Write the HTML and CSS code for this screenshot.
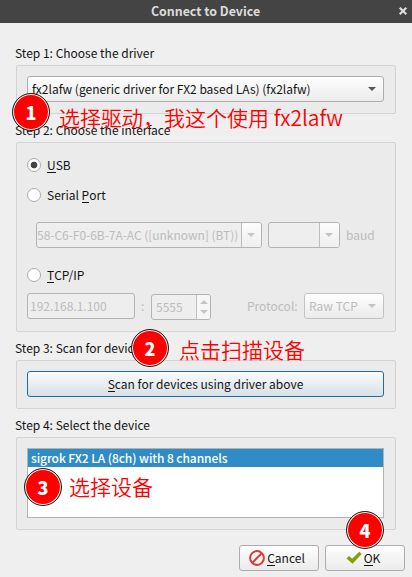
FILE: index.html
```html
<!DOCTYPE html>
<html lang="zh-CN">
<head>
<meta charset="utf-8">
<title>Connect to Device</title>
<link rel="stylesheet" href="styles.css">
</head>
<body>
<div class="dialog">
  <header class="titlebar">
    <span class="title">Connect to Device</span>
    <svg class="close" width="10" height="10" viewBox="0 0 10 10"><path d="M1.7 1.7l6.6 6.6M8.3 1.7l-6.6 6.6" stroke="#e0e0e0" stroke-width="2.1" fill="none"/></svg>
  </header>
  <main class="content">
    <section class="group">
      <h2 class="label">Step 1: Choose the driver</h2>
      <div class="box">
        <div class="combo"><span>fx2lafw (generic driver for FX2 based LAs) (fx2lafw)</span><i class="arrow"></i></div>
      </div>
    </section>
    <section class="group">
      <h2 class="label">Step 2: Choose the interface</h2>
      <div class="box iface">
        <div class="radio"><i class="dot on"></i><span><u>U</u>SB</span></div>
        <div class="radio serial"><i class="dot"></i><span>Serial <u>P</u>ort</span></div>
        <div class="row serial-row">
          <div class="edit port"><span class="value">58-C6-F0-6B-7A-AC ([unknown] (BT))</span><span class="drop"><i class="arrow"></i></span></div>
          <div class="edit rate"><span class="value"></span><span class="drop"><i class="arrow"></i></span></div>
          <span class="baud">baud</span>
        </div>
        <div class="radio"><i class="dot"></i><span><u>T</u>CP/IP</span></div>
        <div class="row tcp-row">
          <div class="edit host"><span class="value">192.168.1.100</span></div>
          <span class="colon">:</span>
          <div class="edit spin"><span class="value">5555</span><span class="steps"><i class="arrow up"></i><i class="arrow"></i></span></div>
          <span class="proto">Protocol:</span>
          <div class="combo raw"><span>Raw TCP</span><i class="arrow"></i></div>
        </div>
      </div>
    </section>
    <section class="group">
      <h2 class="label">Step 3: Scan for devices</h2>
      <div class="box">
        <div class="scan"><span><u>S</u>can for devices using driver above</span></div>
      </div>
    </section>
    <section class="group">
      <h2 class="label">Step 4: Select the device</h2>
      <div class="box">
        <div class="list"><div class="item">sigrok FX2 LA (8ch) with 8 channels</div></div>
      </div>
    </section>
  </main>
  <footer class="actions">
    <div class="button">
      <svg width="16" height="16" viewBox="0 0 16 16"><circle cx="8" cy="8" r="6.9" fill="none" stroke="#da3a3a" stroke-width="2"/><path d="M3.4 12.6l9.2-9.2" stroke="#da3a3a" stroke-width="2"/></svg>
      <span><u>C</u>ancel</span>
    </div>
    <div class="button ok">
      <svg width="16" height="14" viewBox="0 0 16 14"><path d="M.5 7.4L3 5.1l3.1 2.7L13.3.7 15.7 3 6.5 12.8z" fill="#859f0b"/></svg>
      <span><u>O</u>K</span>
    </div>
  </footer>
  <div class="note note1"><b>1</b><span>选择驱动，我这个使用 fx2lafw</span></div>
  <div class="note note2"><b>2</b><span>点击扫描设备</span></div>
  <div class="note note3"><b>3</b><span>选择设备</span></div>
  <div class="note note4"><b>4</b></div>
</div>
</body>
</html>
```
FILE: styles.css
```css
* { box-sizing: border-box; }
body { margin: 0; background: #efefef; color: #141414; font: 12px/20px "Noto Sans CJK SC", "Noto Sans", sans-serif; white-space: nowrap; }
.dialog { position: relative; width: 412px; height: 577px; overflow: hidden; }
.titlebar { height: 23px; background: #444; color: #dcdcdc; display: flex; align-items: center; justify-content: flex-end; padding-right: 4px; }
.title { flex: 1; text-align: center; font-weight: 700; font-size: 12.4px; line-height: 22px; padding-left: 13px; margin-top: -1px; }
.close { flex: none; margin-top: -1px; }
.content { padding: 18px 16px 0; }
.group { margin-bottom: 4px; }
.label { margin: 0 0 0 -1px; height: 24px; font: inherit; line-height: 24px; }
.box { width: 380px; border: 1px solid #d3d3d3; border-radius: 2px; background: #ebebeb; padding: 10px 11px 11px 10px; }
u { text-decoration: none; box-shadow: inset 0 -1px #141414; display: inline-block; line-height: 17px; }
.combo, .scan, .button { height: 26px; border: 1px solid #adadad; border-radius: 3px; background: linear-gradient(#fefefe, #ebebeb); display: flex; align-items: center; }
.combo { justify-content: space-between; padding: 0 7px 0 4px; width: 357px; height: 26px; }
.arrow { width: 0; height: 0; border: 4px solid transparent; border-top-color: #555; border-bottom: 0; }
.iface { height: 190px; padding-top: 12px; }
.radio { height: 20px; display: flex; align-items: center; gap: 6px; }
.dot { width: 14px; height: 14px; border: 1px solid #aaa; border-radius: 50%; background: #fff; }
.on { background: radial-gradient(circle, #444 0 3px, #fff 3.7px); }
.serial { margin-top: 10px; }
.row { display: flex; color: #bcbcbc; }
.row .arrow { border-top-color: #c4c4c4; }
.serial-row { margin: 17px 0 17px 9px; align-items: center; }
.edit { height: 26px; border: 1px solid #b3b3b3; border-radius: 3px; background: #eee; display: flex; overflow: hidden; flex: none; }
.value { flex: 1; overflow: hidden; line-height: 24px; }
.drop { width: 20px; border-left: 1px solid #bdbdbd; background: linear-gradient(#fcfcfc, #efefef); display: flex; align-items: center; justify-content: center; padding-right: 2px; }
.port { width: 226px; }
.port .value { letter-spacing: -0.03px; }
.rate { width: 72px; margin-left: 6px; }
.baud { margin-left: 6px; }
.tcp-row { margin-top: 8px; align-items: center; }
.host { width: 108px; }
.host .value { padding-left: 2px; }
.colon { width: 16px; padding-left: 6px; }
.spin { width: 60px; height: 26px; position: relative; top: 1px; }
.spin .value { padding-left: 4px; }
.steps { width: 14px; border-left: 1px solid #c0c0c0; background: #f6f6f6; display: flex; flex-direction: column; align-items: center; justify-content: center; gap: 6px; }
.row .up { border-top: 0; border-bottom: 4px solid #c4c4c4; }
.proto { margin-left: 36px; width: 57px; }
.raw { width: 80px; border-color: #c2c2c2; }
.scan { width: 357px; border-color: #236b99; background: linear-gradient(#fafcfd, #d6e0e6); justify-content: center; }
.list { width: 357px; height: 70px; background: #fff; border: 1px solid #b3b3b3; }
.item { height: 18px; background: #308cc6; color: #fff; line-height: 18px; padding-left: 3px; font-weight: 500; letter-spacing: -0.08px; }
.actions { display: flex; justify-content: flex-end; gap: 6px; padding: 11px 7px 0 0; }
.button { width: 80px; justify-content: center; gap: 2px; padding-right: 4px; }
.note { position: absolute; display: flex; align-items: center; height: 40px; color: #f00; font-size: 21px; }
.note b { width: 38px; height: 38px; border: 1px solid #222; border-radius: 50%; background: #f00; box-shadow: inset 0 0 0 1px #fff; color: #fff; font: 900 18px/37px "Noto Sans CJK SC", sans-serif; text-align: center; }
.note span { font-weight: 350; line-height: 30px; }
.note1 { left: 12px; top: 92px; }
.note1 span { margin: 10px 0 0 9px; }
.note2 { left: 131px; top: 328px; }
.note2 span { margin: 2px 0 0 10px; }
.note3 { left: 24px; top: 467px; }
.note3 span { margin: -2px 0 0 7px; }
.note4 { left: 346px; top: 510px; }
```
